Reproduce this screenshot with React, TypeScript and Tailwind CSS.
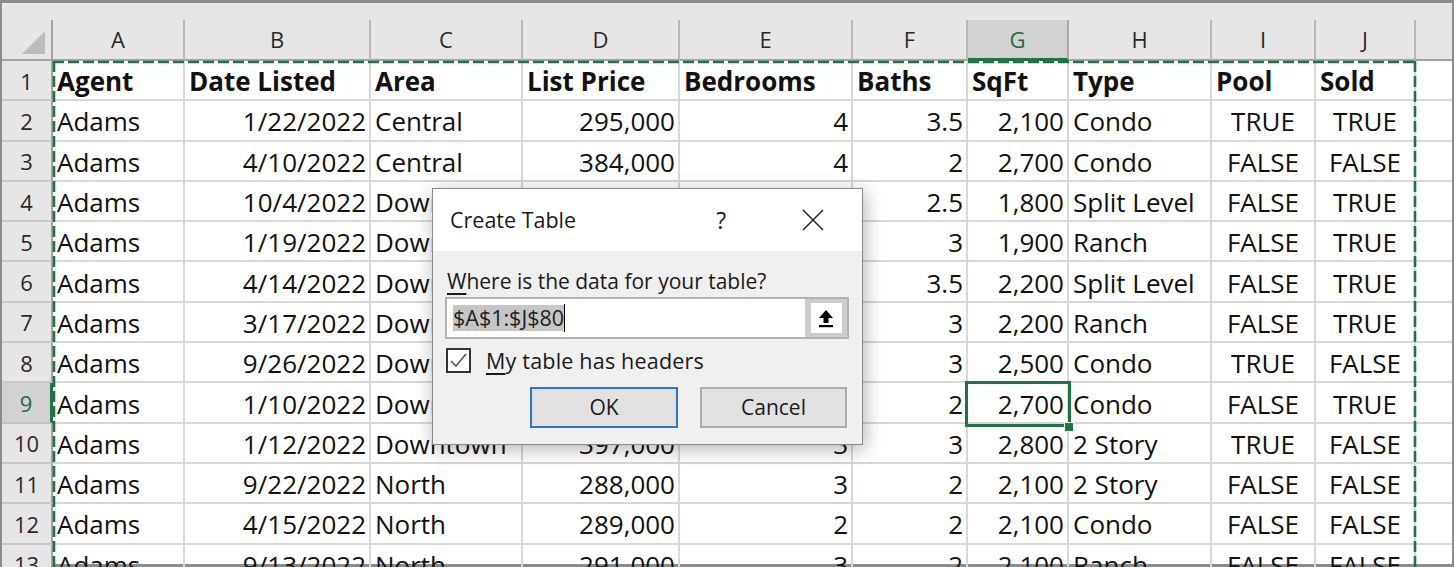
import React from 'react';

type Col = {
  key: string;
  width: string;
  align: 'left' | 'right' | 'center';
};

const columns: Col[] = [
  { key: 'A', width: 'w-[132px]', align: 'left' },
  { key: 'B', width: 'w-[186px]', align: 'right' },
  { key: 'C', width: 'w-[152px]', align: 'left' },
  { key: 'D', width: 'w-[157px]', align: 'right' },
  { key: 'E', width: 'w-[173px]', align: 'right' },
  { key: 'F', width: 'w-[115px]', align: 'right' },
  { key: 'G', width: 'w-[101px]', align: 'right' },
  { key: 'H', width: 'w-[143px]', align: 'left' },
  { key: 'I', width: 'w-[104px]', align: 'center' },
  { key: 'J', width: 'w-[100px]', align: 'center' },
];

const headers = ['Agent', 'Date Listed', 'Area', 'List Price', 'Bedrooms', 'Baths', 'SqFt', 'Type', 'Pool', 'Sold'];

const rows: string[][] = [
  ['Adams', '1/22/2022', 'Central', '295,000', '4', '3.5', '2,100', 'Condo', 'TRUE', 'TRUE'],
  ['Adams', '4/10/2022', 'Central', '384,000', '4', '2', '2,700', 'Condo', 'FALSE', 'FALSE'],
  ['Adams', '10/4/2022', 'Downtown', '415,000', '4', '2.5', '1,800', 'Split Level', 'FALSE', 'TRUE'],
  ['Adams', '1/19/2022', 'Downtown', '265,000', '3', '3', '1,900', 'Ranch', 'FALSE', 'TRUE'],
  ['Adams', '4/14/2022', 'Downtown', '440,000', '4', '3.5', '2,200', 'Split Level', 'FALSE', 'TRUE'],
  ['Adams', '3/17/2022', 'Downtown', '315,000', '3', '3', '2,200', 'Ranch', 'FALSE', 'TRUE'],
  ['Adams', '9/26/2022', 'Downtown', '305,000', '3', '3', '2,500', 'Condo', 'TRUE', 'FALSE'],
  ['Adams', '1/10/2022', 'Downtown', '320,000', '3', '2', '2,700', 'Condo', 'FALSE', 'TRUE'],
  ['Adams', '1/12/2022', 'Downtown', '397,000', '3', '3', '2,800', '2 Story', 'TRUE', 'FALSE'],
  ['Adams', '9/22/2022', 'North', '288,000', '3', '2', '2,100', '2 Story', 'FALSE', 'FALSE'],
  ['Adams', '4/15/2022', 'North', '289,000', '2', '2', '2,100', 'Condo', 'FALSE', 'FALSE'],
  ['Adams', '9/13/2022', 'North', '291,000', '3', '2', '2,100', 'Ranch', 'FALSE', 'FALSE'],
];

const alignClass = {
  left: 'justify-start pl-[4px]',
  right: 'justify-end pr-[3px]',
  center: 'justify-center',
};

const ColumnHeader = () => (
  <div className="flex flex-col bg-[#e6e6e6]">
    <div className="h-[17px]" />
    <div className="flex h-[41px]">
      <div className="flex w-[51px] shrink-0 items-end justify-end border-r-2 border-b-2 border-[#a3a3a3] pr-[6px] pb-[5px]">
        <svg width="23" height="23" viewBox="0 0 23 23">
          <polygon points="23,0 23,23 0,23" fill="#bcbcbc" />
        </svg>
      </div>
      {columns.map((col) =>
        col.key === 'G' ? (
          <div
            key={col.key}
            className={`${col.width} flex shrink-0 items-center justify-center border-r-2 border-b-[3px] border-r-[#a8a8a8] border-b-[#217346] bg-[#d2d2d2] text-[22px] text-[#1e6b40]`}
          >
            {col.key}
          </div>
        ) : (
          <div
            key={col.key}
            className={`${col.width} flex shrink-0 items-center justify-center border-r-2 border-b-2 border-r-[#b8b8b8] border-b-[#a3a3a3] text-[22px] text-[#2a2a2a]`}
          >
            {col.key}
          </div>
        )
      )}
      <div className="flex-1 border-b-2 border-[#a3a3a3]" />
    </div>
  </div>
);

const RowHeader = ({ n }: { n: number }) =>
  n === 9 ? (
    <div className="flex w-[51px] shrink-0 items-center justify-center border-r-[3px] border-b-2 border-r-[#217346] border-b-[#c4c4c4] bg-[#d2d2d2] pt-[2px] text-[22px] text-[#1e6b40]">
      {n}
    </div>
  ) : (
    <div className="flex w-[51px] shrink-0 items-center justify-center border-r-2 border-b-2 border-r-[#a3a3a3] border-b-[#c8c8c8] bg-[#e6e6e6] pt-[2px] text-[22px] text-[#2a2a2a]">
      {n}
    </div>
  );

const SheetRow = ({ n, cells, bold }: { n: number; cells: string[]; bold?: boolean }) => (
  <div className="flex h-[40.3px] shrink-0">
    <RowHeader n={n} />
    {columns.map((col, i) => (
      <div
        key={col.key}
        className={`${col.width} ${bold ? alignClass.left : alignClass[col.align]} ${
          bold ? 'font-bold' : ''
        } flex shrink-0 items-center overflow-hidden whitespace-nowrap border-r-2 border-b-2 border-[#d8d8d8] pt-[3px] text-[26px] text-[#111]`}
      >
        {cells[i]}
      </div>
    ))}
    <div className="flex-1 border-b-2 border-[#d8d8d8]" />
  </div>
);

const CreateTableDialog = () => (
  <div className="absolute left-[432px] top-[188px] flex h-[257px] w-[431px] flex-col border border-[#8a8a8a] bg-[#f0f0f0] font-['Open_Sans',sans-serif] text-[#1a1a1a] shadow-[2px_4px_18px_rgba(0,0,0,0.3)]">
    <div className="flex h-[62px] shrink-0 items-center bg-white pl-[17px]">
      <span className="text-[21.5px]">Create Table</span>
      <span className="ml-[140px] text-[23px]">?</span>
      <svg className="ml-[76px]" width="22" height="22" viewBox="0 0 22 22">
        <path d="M1 1 L21 21 M21 1 L1 21" stroke="#222" strokeWidth="1.5" fill="none" />
      </svg>
    </div>
    <div className="flex flex-col pl-[12px] pr-[13px]">
      <div className="mt-[18px] h-[24px] pl-[2px] text-[21px] leading-[24px]">
        <span className="underline underline-offset-[4px]">W</span>here is the data for your table?
      </div>
      <div className="mt-[4px] flex h-[42px] border-2 border-[#b3b3b3] bg-white">
        <div className="flex flex-1 items-center pl-[6px]">
          <span className="bg-[#c6c6c6] text-[21.5px] leading-[26px] text-[#222]">$A$1:$J$80</span>
          <span className="h-[28px] w-px bg-black" />
        </div>
        <div className="flex w-[42px] items-center justify-center bg-[#cdcdcd]">
          <div className="flex h-[30px] w-[31px] items-center justify-center bg-white">
            <svg width="16" height="19" viewBox="0 0 16 19">
              <polygon points="8,1 1,9 5.5,9 5.5,14 10.5,14 10.5,9 15,9" fill="#000" />
              <rect x="1" y="16" width="14" height="2.2" fill="#000" />
            </svg>
          </div>
        </div>
      </div>
      <div className="mt-[9px] flex h-[25px] items-center">
        <div className="ml-[1px] flex h-[25px] w-[25px] items-center justify-center border-2 border-[#333] bg-white">
          <svg width="21" height="21" viewBox="0 0 21 21">
            <polyline points="3,11 8,16 18,4" stroke="#5a5a5a" strokeWidth="1.6" fill="none" />
          </svg>
        </div>
        <span className="ml-[15px] text-[21.5px] leading-[25px] tracking-[0.2px]">
          <span className="underline underline-offset-[4px]">M</span>y table has headers
        </span>
      </div>
      <div className="mt-[14px] mr-[2px] flex justify-end gap-[22px]">
        <button className="flex h-[41px] w-[148px] items-center justify-center border-2 border-[#2c78c2] bg-[#e1e1e1] text-[21px]">
          OK
        </button>
        <button className="flex h-[41px] w-[147px] items-center justify-center border-2 border-[#adadad] bg-[#e1e1e1] text-[21px]">
          Cancel
        </button>
      </div>
    </div>
  </div>
);

export default function App() {
  return (
    <div className="relative h-[567px] w-[1454px] overflow-hidden bg-white font-['Open_Sans',sans-serif]">
      <div className="flex h-full flex-col border-x-2 border-t-[3px] border-b-[3px] border-[#8c8c8c]">
        <ColumnHeader />
        <SheetRow n={1} cells={headers} bold />
        {rows.map((r, i) => (
          <SheetRow key={i} n={i + 2} cells={r} />
        ))}
      </div>

      <svg className="pointer-events-none absolute left-0 top-0" width="1454" height="567">
        <path
          d="M53 62 H1416 M54 61 V567 M1415 61 V567"
          stroke="#217346"
          strokeWidth="2.6"
          strokeDasharray="11 4"
          fill="none"
        />
      </svg>

      <div className="pointer-events-none absolute left-[965px] top-[381px] h-[46px] w-[106px] border-[3px] border-[#217346]" />
      <div className="pointer-events-none absolute left-[1064px] top-[422px] h-[10px] w-[10px] border border-white bg-[#217346]" />

      <CreateTableDialog />
    </div>
  );
}
